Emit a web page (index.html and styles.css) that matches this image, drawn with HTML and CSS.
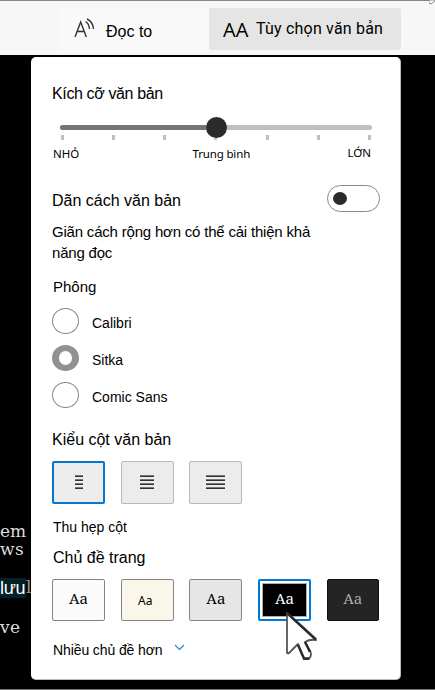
FILE: index.html
```html
<!DOCTYPE html>
<html lang="vi">
<head>
<meta charset="utf-8">
<title>Tùy chọn văn bản</title>
<link rel="stylesheet" href="styles.css">
</head>
<body>
<header class="toolbar">
  <button class="tool read">
    <svg width="22" height="20" viewBox="0 0 22 20" fill="none" stroke="#333" stroke-width="1.4"><path d="M1 20L6.700 5L12.300 20M3 14.500H10.500M11.500 4.500Q15 6.500 15.500 12M13 2Q19 4.500 19.500 12"/></svg>
    <span class="t-read">Đọc to</span>
  </button>
  <button class="tool options"><span class="aa">AA</span><span class="t-options">Tùy chọn văn bản</span></button>
</header>
<main class="page">
  <div class="article"><p class="line l1">em</p><p class="line l2">ws</p><p class="line l3"><mark>lưu</mark><span>l</span></p><p class="line l4">ve</p></div>
  <section class="panel">
    <h2 class="size-title"><span>Kích cỡ văn bản</span></h2>
    <div class="slider"><div class="track"><div class="fill"></div><div class="thumb"></div></div>
      <div class="ticks"><i></i><i></i><i></i><i></i><i></i><i></i><i></i></div></div>
    <div class="labels"><span class="small">NHỎ</span><span class="mid">Trung bình</span><span class="large">LỚN</span></div>
    <div class="spacing"><h2>Dãn cách văn bản</h2><div class="toggle"><i></i></div></div>
    <p class="desc">Giãn cách rộng hơn có thể cải thiện khả<br>năng đọc</p>
    <h2 class="font-title">Phông</h2>
    <div class="radios">
      <label><i class="radio"></i><span>Calibri</span></label>
      <label><i class="radio checked"></i><span>Sitka</span></label>
      <label><i class="radio"></i><span>Comic Sans</span></label>
    </div>
    <h2 class="column-title">Kiểu cột văn bản</h2>
    <div class="tiles columns">
      <div class="tile selected"><div class="bars narrow"><i></i><i></i><i></i><i></i></div></div>
      <div class="tile"><div class="bars medium"><i></i><i></i><i></i><i></i></div></div>
      <div class="tile"><div class="bars wide"><i></i><i></i><i></i><i></i></div></div>
    </div>
    <p class="caption">Thu hẹp cột</p>
    <h2 class="theme-title">Chủ đề trang</h2>
    <div class="tiles themes">
      <div class="tile white">Aa</div><div class="tile cream">Aa</div><div class="tile grey">Aa</div>
      <div class="tile black"><span>Aa</span></div><div class="tile dark">Aa</div>
    </div>
    <div class="more"><span>Nhiều chủ đề hơn</span><svg width="11" height="7" viewBox="0 0 11 7" fill="none" stroke="#1687dc" stroke-width="1.1"><path d="M1 1L5.500 5.500L10 1"/></svg></div>
  </section>
</main>
<svg class="corner" width="6" height="5" viewBox="0 0 6 5"><path d="M0 0H6V1L2 4L0 3Z" fill="#fff" stroke="#888"/></svg>
<svg class="cursor" width="34" height="52" viewBox="0 0 34 52"><path d="M2 2V42Q4 43 6 40L13 33L19 48H24Q28 43 24 38L20 31Q25 28 31 29Z" fill="#fff" stroke="#555" stroke-width="1.800" stroke-linejoin="round"/><path d="M2 2L31 28.500M20 31L25 41M13 34L19 47.500H24" fill="none" stroke="#2b2b2b" stroke-width="2.400"/></svg>
</body>
</html>
```
FILE: styles.css
```css
* { box-sizing: border-box; }
body { margin: 0; width: 435px; height: 690px; overflow: hidden; background: #000; color: #000; font-family: "Liberation Sans", Arial, sans-serif; }
h2, p { margin: 0; font-weight: 400; white-space: nowrap; }
h2 { font-size: 16px; line-height: 26px; height: 24px; }
i { display: block; }
svg { display: block; flex: none; }
.toolbar { height: 55px; background: #f7f7f7; border-top: 1px solid #858585; display: flex; padding: 7px 0 0 58px; }
.tool { border: 0; height: 42px; padding: 0; display: flex; font: inherit; color: #000; border-radius: 3px; white-space: nowrap; }
.read { width: 151px; background: #f9f9f9; padding: 9px 0 0 16px; gap: 10px; }
.t-read { font-size: 16px; line-height: 30px; }
.options { width: 192px; background: #e5e5e5; padding-left: 14px; }
.aa { width: 33px; font: 20px/44px "Open Sans", sans-serif; text-align: left; }
.t-options { font: 16px/41px Roboto, sans-serif; letter-spacing: .2px; }
.page { display: flex; height: 635px; border-bottom: 1px solid #777; }
.article { width: 31px; padding-top: 467px; overflow: hidden; color: #ddd; font: 17px/18px "DejaVu Serif", serif; }
.line { height: 18px; }
.l2 { letter-spacing: .5px; }
.l3 { margin-top: 20px; height: 20px; display: flex; color: #999; }
.l3 mark { width: 26px; flex: none; background: #03202b; color: #fff; font: 18px/21px "Liberation Sans", sans-serif; letter-spacing: -.3px; }
.l4 { margin-top: 20px; letter-spacing: .5px; }
.panel { width: 370px; height: 623px; margin-top: 2px; padding: 24px 20px 0 21px; background: #fff; border-right: 1px solid #bbb; border-bottom: 1px solid #bbb; border-radius: 5px; }
.size-title { letter-spacing: -.37px; }
.slider { height: 38px; padding: 20px 0 0 8px; }
.track { width: 312px; height: 5px; border-radius: 3px; background: #bfbfbf; display: flex; align-items: center; position: relative; z-index: 1; }
.fill { width: 146px; height: 5px; border-radius: 3px 0 0 3px; background: #757575; }
.thumb { width: 21px; height: 21px; border-radius: 50%; background: #2b2b2b; }
.ticks { width: 311px; display: flex; justify-content: space-between; margin-top: 5px; padding-left: 1px; }
.ticks i { width: 3px; height: 5px; background: #bfbfbf; }
.labels { height: 42px; display: flex; font: 11.5px/20px "Noto Sans", sans-serif; padding-left: 1px; white-space: nowrap; }
.labels span { flex: none; }
.small { width: 139.500px; line-height: 22px; }
.mid { width: 155px; line-height: 22px; letter-spacing: -.15px; }
.large { width: 40px; line-height: 20px; }
.spacing { display: flex; justify-content: space-between; height: 36px; }
.spacing h2 { margin-top: 3px; }
.toggle { width: 53px; height: 27px; border: 1px solid #888; border-radius: 14px; padding: 6px 5px; }
.toggle i { width: 14px; height: 13px; border-radius: 50%; background: #2b2b2b; }
.desc { height: 53px; font-size: 15px; line-height: 21px; letter-spacing: -.2px; }
.font-title { font-size: 15px; padding-left: 1px; height: 28px; }
.radios { height: 125px; }
.radios label { display: flex; height: 37px; align-items: center; gap: 13px; font-size: 14px; }
.radios span { padding-top: 4px; }
.radio { width: 27px; height: 26px; border: 1px solid #888; border-radius: 50%; }
.checked { border: 7px solid #919191; border-width: 6px 7px; }
.column-title { height: 34px; }
.tiles { display: flex; gap: 15.700px; }
.tile { width: 53px; flex: none; display: flex; align-items: center; justify-content: center; border: 1px solid #b8b8b8; border-radius: 2px; }
.columns .tile { height: 43px; background: #ececec; }
.columns .selected { border: 2px solid #0078d4; }
.bars { display: grid; gap: 2px; margin-bottom: 1px; }
.bars i { height: 2px; background: #777; border-bottom: 1px solid #333; }
.narrow { width: 8px; }
.medium { width: 14px; }
.wide { width: 19px; }
.caption { font-size: 14px; line-height: 20px; padding-left: 1px; margin-top: 13px; }
.theme-title { margin-top: 8px; height: 34px; padding-left: 1px; }
.themes .tile { height: 42px; border-color: #858585; padding-bottom: 5px; font: 15px "Noto Serif", "DejaVu Serif", serif; }
.white { background: #fbfbfb; }
.cream { background: #faf6e9; }
.grey { background: #e6e6e6; }
.themes .cream { font: 12px "Noto Sans", sans-serif; padding: 1px 4px 0 0; }
.themes .black { border: 2px solid #0078d4; padding: 2px; background: #fff; }
.black span { width: 100%; height: 100%; background: #000; color: #fff; border: 1px solid #aaa; text-align: center; line-height: 28px; }
.themes .dark { background: #242424; border-color: #111; color: #aaa; width: 52px; }
.more { margin-top: 19px; display: flex; gap: 11px; padding-left: 1px; font-size: 14px; line-height: 20px; letter-spacing: -.1px; white-space: nowrap; }
.more svg { margin-top: 4px; }
.corner { position: absolute; left: 429px; top: 0; }
.cursor { position: absolute; left: 285px; top: 611px; }
```
